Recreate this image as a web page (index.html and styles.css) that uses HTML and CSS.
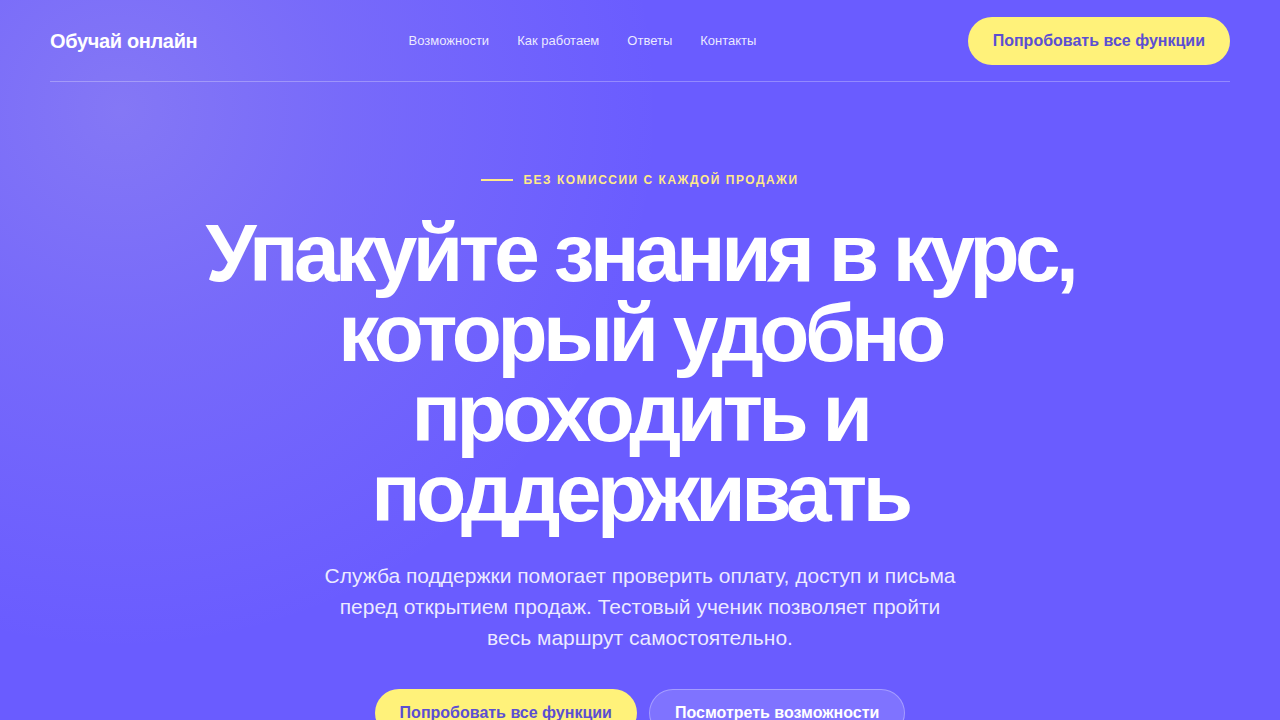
FILE: index.html
```html
<!DOCTYPE html>
<html lang="ru">
<head>
<meta charset="utf-8">
<title>Обучай онлайн</title>
<link rel="stylesheet" href="styles.css">
</head>
<body>
<div class="page">
  <header class="header">
    <div class="logo">Обучай онлайн</div>
    <nav class="nav">
      <a href="#">Возможности</a>
      <a href="#">Как работаем</a>
      <a href="#">Ответы</a>
      <a href="#">Контакты</a>
    </nav>
    <a class="btn btn-primary" href="#">Попробовать все функции</a>
  </header>
  <main class="hero">
    <div class="eyebrow"><span class="eyebrow-line"></span>Без комиссии с каждой продажи</div>
    <h1 class="title">Упакуйте знания в курс, который удобно проходить и поддерживать</h1>
    <p class="lead">Служба поддержки помогает проверить оплату, доступ и письма перед открытием продаж. Тестовый ученик позволяет пройти весь маршрут самостоятельно.</p>
    <div class="actions">
      <a class="btn btn-primary" href="#">Попробовать все функции</a>
      <a class="btn btn-ghost" href="#">Посмотреть возможности</a>
    </div>
  </main>
</div>
</body>
</html>
```

FILE: styles.css
```css
* { box-sizing: border-box; }
html, body { margin: 0; padding: 0; }
body {
  font-family: "Liberation Sans", Arial, sans-serif;
  color: #fff;
  background-color: #6a5cff;
  background-image:
    radial-gradient(circle at 120px 110px, rgba(200, 190, 220, 0.28) 0, rgba(200, 190, 220, 0.14) 230px, rgba(200, 190, 220, 0) 540px);
  min-height: 720px;
  overflow: hidden;
}
.page { width: 1280px; padding: 0 50px; }
.header {
  display: flex;
  align-items: center;
  justify-content: space-between;
  padding: 17px 0 16px;
  border-bottom: 1px solid rgba(255, 255, 255, 0.28);
}
.logo { font-size: 20px; font-weight: 700; letter-spacing: -0.35px; }
.nav { display: flex; gap: 28px; margin-top: -1px; }
.nav a { color: rgba(255, 255, 255, 0.88); text-decoration: none; font-size: 13px; }
.btn {
  display: inline-flex;
  align-items: center;
  justify-content: center;
  height: 48px;
  padding: 0 25px;
  border-radius: 24px;
  font-size: 16px;
  font-weight: 700;
  text-decoration: none;
  white-space: nowrap;
}
.btn-primary { background: #fff27a; color: #5b4fd2; }
.btn-ghost {
  background: rgba(255, 255, 255, 0.14);
  color: #fff;
  border: 1px solid rgba(255, 255, 255, 0.3);
}
.hero {
  display: flex;
  flex-direction: column;
  align-items: center;
  text-align: center;
  padding-top: 90px;
}
.eyebrow {
  display: flex;
  align-items: center;
  gap: 10px;
  font-size: 12px;
  font-weight: 700;
  letter-spacing: 1.5px;
  text-transform: uppercase;
  color: #ffe98a;
  line-height: 16px;
}
.eyebrow-line { width: 32px; height: 2px; background: #ffe98a; display: block; }
.title {
  margin: 25px 0 0;
  font-size: 82px;
  line-height: 80px;
  font-weight: 700;
  letter-spacing: -4.5px;
  max-width: 900px;
}
.lead {
  margin: 27px 0 0;
  max-width: 640px;
  font-size: 21px;
  line-height: 31px;
  color: rgba(255, 255, 255, 0.88);
}
.actions { display: flex; gap: 12px; margin-top: 36px; }
```
